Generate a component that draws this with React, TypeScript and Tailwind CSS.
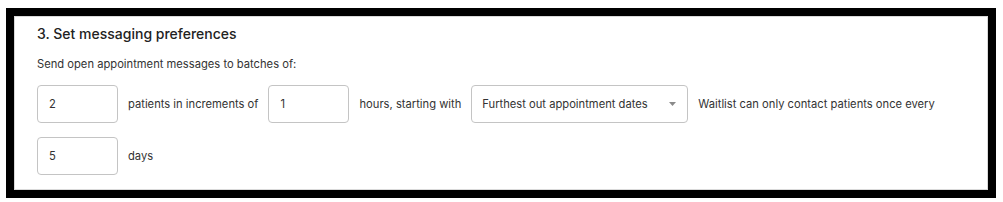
export default function App() {
  return (
    <div className="w-[1003px] h-[202px] bg-white pt-2 pl-[6px]" style={{ fontFamily: "Inter, 'Liberation Sans', sans-serif" }}>
      <div className="w-[990px] h-[190px] border-8 border-black bg-white">
        <div className="h-full border border-[#d9d9d9] pl-[22px] pt-[5px]">
          <h2 className="text-[14px] leading-6 font-medium text-[#222]">3. Set messaging preferences</h2>
          <p className="mt-[8px] text-[11.2px] leading-5 text-[#333]">Send open appointment messages to batches of:</p>
          <div className="mt-[11px] flex flex-wrap items-center gap-x-[10px] gap-y-[14px] text-[11.2px] text-[#333]">
            <div className="w-[81px] h-[38px] border border-[#c4c4c4] rounded-[4px] flex items-center pl-[11px]">2</div>
            <span>patients in increments of</span>
            <div className="w-[81px] h-[38px] border border-[#c4c4c4] rounded-[4px] flex items-center pl-[11px]">1</div>
            <span>hours, starting with</span>
            <div className="w-[217px] h-[38px] border border-[#c4c4c4] rounded-[4px] flex items-center justify-between pl-[10px] pr-[11px]">
              <span>Furthest out appointment dates</span>
              <svg width="7" height="4" viewBox="0 0 7 4"><path d="M0 0 L7 0 L3.5 4 Z" fill="#8a8a8a" /></svg>
            </div>
            <span>Waitlist can only contact patients once every</span>
            <div className="w-[81px] h-[38px] border border-[#c4c4c4] rounded-[4px] flex items-center pl-[11px]">5</div>
            <span>days</span>
          </div>
        </div>
      </div>
    </div>
  );
}
